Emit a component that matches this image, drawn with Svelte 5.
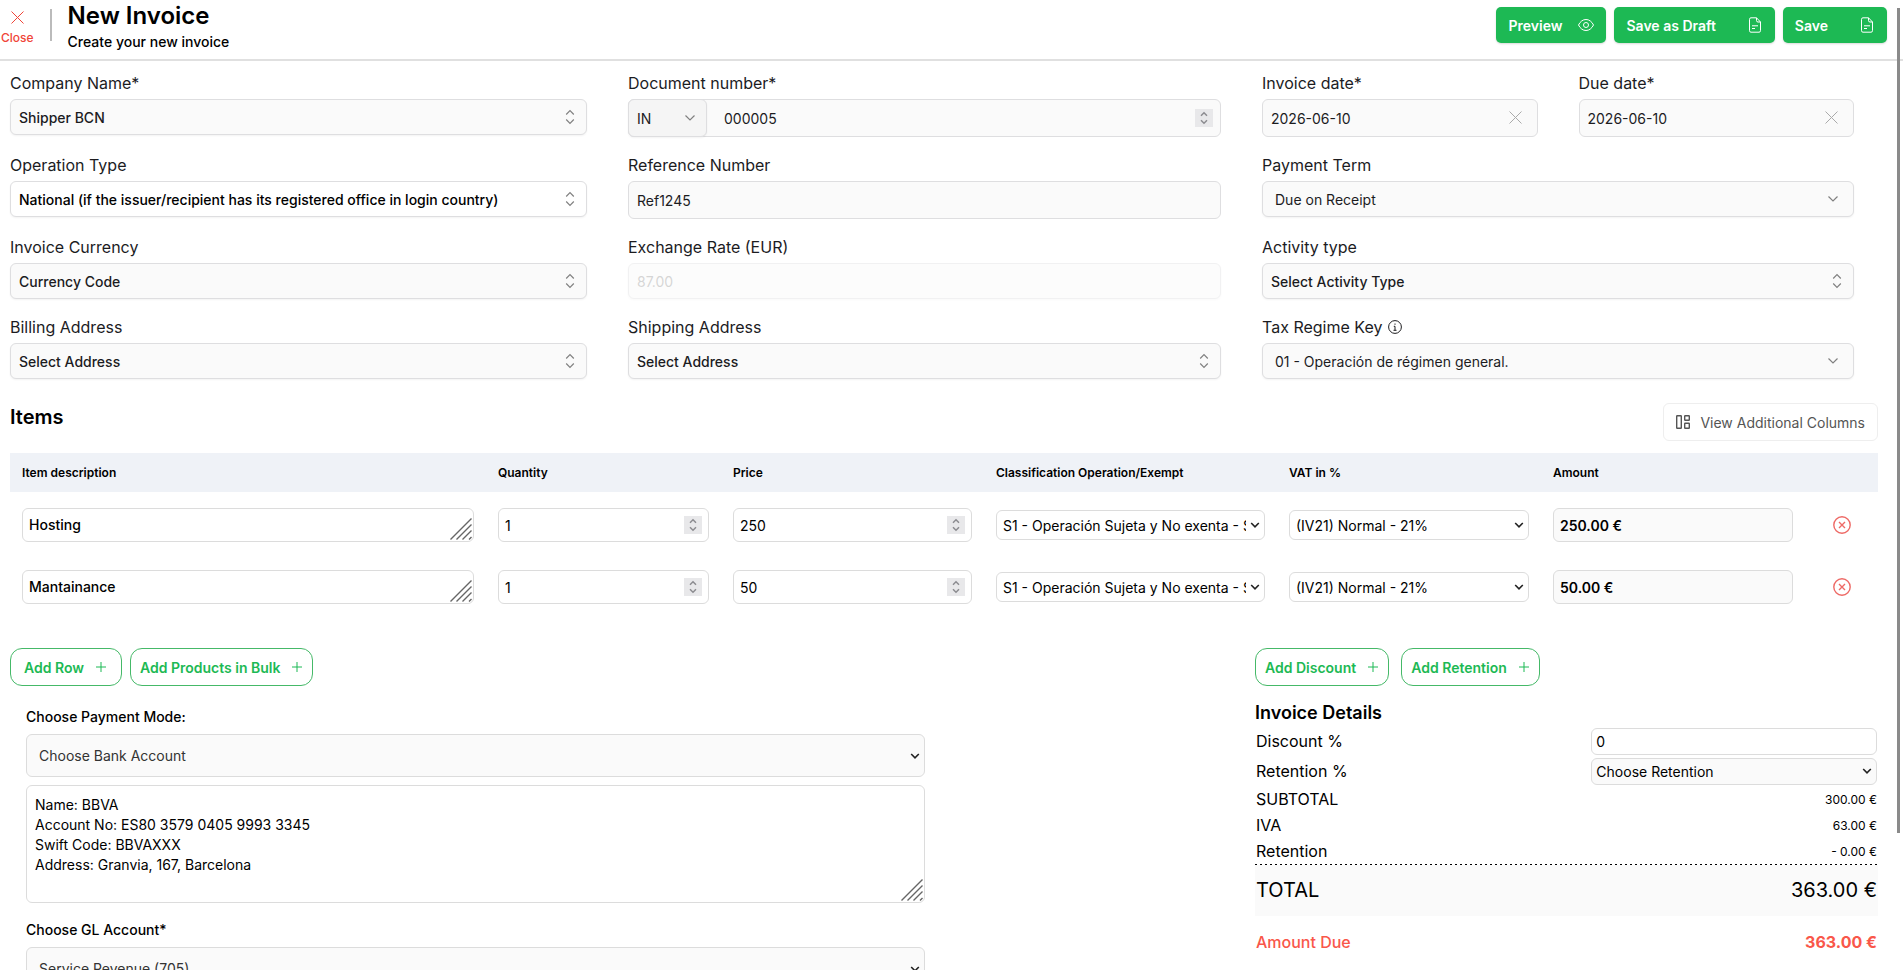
<script lang="ts">
  let items = $state([
    { name: 'Hosting', quantity: 1, price: 250 },
    { name: 'Mantainance', quantity: 1, price: 50 }
  ]);
  let invoiceDate = $state('2026-06-10');
  let dueDate = $state('2026-06-10');
  let discount = $state('0');
  let bankDetails = $state('Name: BBVA\nAccount No: ES80 3579 0405 9993 3345\nSwift Code: BBVAXXX\nAddress: Granvia, 167, Barcelona');

  const VAT = 0.21;
  let subtotal = $derived(items.reduce((sum, item) => sum + item.quantity * item.price, 0));
  let iva = $derived(subtotal * VAT);
  let total = $derived(subtotal + iva);

  function money(value: number){ return value.toFixed(2) + ' €'; }
  function addRow(){ items.push({ name: '', quantity: 1, price: 0 }); }
  function removeRow(index: number){ items.splice(index, 1); }
</script>

{#snippet updown()}
  <svg class="mark" width="10" height="16" viewBox="0 0 10 16"><path d="M1.200 5.500 5 1.700l3.800 3.800M1.200 10.500 5 14.300l3.800-3.800" /></svg>
{/snippet}

{#snippet chevron()}
  <svg class="mark chevron" width="10" height="6" viewBox="0 0 10 6"><path d="M0.5 0.5 5 5l4.500-4.500" /></svg>
{/snippet}

{#snippet arrow()}
  <svg class="mark arrow" width="10" height="6" viewBox="0 0 10 6"><path d="M1.200 1 5 4.800 8.800 1" /></svg>
{/snippet}

{#snippet spinner()}
  <svg class="mark spinner" width="18" height="18" viewBox="0 0 18 18"><rect width="18" height="18" /><path d="M6 6.800 9 3.800l3 3M6 11.200l3 3 3-3" /></svg>
{/snippet}

{#snippet cross()}
  <svg width="13" height="13" viewBox="0 0 13 13"><path d="M.5.5l12 12M12.500.5l-12 12" /></svg>
{/snippet}

{#snippet plus()}
  <svg width="10" height="10" viewBox="0 0 10 10"><path d="M5 0v10M0 5h10" /></svg>
{/snippet}

{#snippet file()}
  <svg width="12" height="16" viewBox="0 0 12 16"><path d="M7.500.8H2A1.500 1.500 0 0 0 .5 2.300v11.400A1.500 1.500 0 0 0 2 15.200h8a1.500 1.500 0 0 0 1.500-1.500V5zM7.500.8V3.500A1.500 1.500 0 0 0 9 5h2.500M3 8.800h6M3 11.500H6" /></svg>
{/snippet}

{#snippet grip()}
  <svg class="grip" width="22" height="22" viewBox="0 0 22 22"><path d="M.5 21.500 21.500.5M6.500 21.500l15-15M12.500 21.500l9-9M19 21.500l2.500-2.500" /></svg>
{/snippet}

{#snippet picker(id: string, label: string, option: string, white = false)}
  <div class="field">
    <label for={id}>{label}</label>
    <div class="control">
      <select {id} class="box strong" class:white><option>{option}</option></select>
      {@render updown()}
    </div>
  </div>
{/snippet}

<div class="page">
  <header>
    <button type="button" class="close">{@render cross()}<span>Close</span></button>
    <div class="heading">
      <h1>New Invoice</h1>
      <p>Create your new invoice</p>
    </div>
    <div class="actions">
      <button type="button">Preview
        <svg width="16" height="12" viewBox="0 0 16 12"><path d="M.5 6C2.300 2.500 4.800.5 8 .5s5.700 2 7.500 5.500c-1.800 3.500-4.300 5.500-7.500 5.500S2.300 9.500.5 6z" /><circle cx="8" cy="6" r="2.500" /></svg>
      </button>
      <button type="button" class="wide">Save as Draft {@render file()}</button>
      <button type="submit" class="wide">Save {@render file()}</button>
    </div>
  </header>

  <section class="details">
    {@render picker('company', 'Company Name*', 'Shipper BCN')}
    <div class="field">
      <label for="number">Document number*</label>
      <div class="document">
        <div class="control prefix">
          <select class="box" aria-label="Series"><option>IN</option></select>
          {@render chevron()}
        </div>
        <div class="control number">
          <input id="number" type="number" value="000005">
          {@render spinner()}
        </div>
      </div>
    </div>
    <div class="dates">
      <div class="field">
        <label for="invoice-date">Invoice date*</label>
        <div class="control">
          <input id="invoice-date" class="box tall" type="text" bind:value={invoiceDate}>
          <button type="button" class="clear" aria-label="Clear" onclick={() => invoiceDate = ''}>{@render cross()}</button>
        </div>
      </div>
      <div class="field">
        <label for="due-date">Due date*</label>
        <div class="control">
          <input id="due-date" class="box tall" type="text" bind:value={dueDate}>
          <button type="button" class="clear" aria-label="Clear" onclick={() => dueDate = ''}>{@render cross()}</button>
        </div>
      </div>
    </div>

    {@render picker('operation', 'Operation Type', 'National (if the issuer/recipient has its registered office in login country)', true)}
    <div class="field">
      <label for="reference">Reference Number</label>
      <input id="reference" class="box tall" type="text" value="Ref1245">
    </div>
    <div class="field">
      <label for="term">Payment Term</label>
      <div class="control">
        <select id="term" class="box inset"><option>Due on Receipt</option></select>
        {@render chevron()}
      </div>
    </div>

    {@render picker('currency', 'Invoice Currency', 'Currency Code')}
    <div class="field">
      <label for="rate">Exchange Rate (EUR)</label>
      <input id="rate" class="box" type="text" value="87.00" disabled>
    </div>
    {@render picker('activity', 'Activity type', 'Select Activity Type')}

    {@render picker('billing', 'Billing Address', 'Select Address')}
    {@render picker('shipping', 'Shipping Address', 'Select Address')}
    <div class="field">
      <label for="regime">Tax Regime Key
        <svg class="info" width="14" height="14" viewBox="0 0 14 14"><circle cx="7" cy="7" r="6.400" /><path d="M7 3.500v1.300M5.800 6.300H7v4M5.500 10.300h3" /></svg>
      </label>
      <div class="control">
        <select id="regime" class="box inset"><option>01 - Operación de régimen general.</option></select>
        {@render chevron()}
      </div>
    </div>
  </section>

  <section class="items">
    <div class="items-head">
      <h2>Items</h2>
      <button type="button" class="columns">
        <svg width="14" height="14" viewBox="0 0 14 14"><rect x=".7" y=".7" width="4.600" height="12.600" rx=".5" /><rect x="8.700" y=".7" width="4.600" height="4.600" rx=".5" /><rect x="8.700" y="8.200" width="4.600" height="5.100" rx=".5" /></svg>
        View Additional Columns
      </button>
    </div>

    <table>
      <thead>
        <tr>
          <th class="c-name">Item description</th>
          <th class="c-quantity">Quantity</th>
          <th class="c-price">Price</th>
          <th class="c-class">Classification Operation/Exempt</th>
          <th class="c-vat">VAT in %</th>
          <th class="c-amount">Amount</th>
          <th class="c-remove" aria-label="Remove"></th>
        </tr>
      </thead>
      <tbody>
        {#each items as item, i}
          <tr>
            <td>
              <div class="control">
                <textarea class="cell medium" rows="1" aria-label="Item description" bind:value={item.name}></textarea>
                {@render grip()}
              </div>
            </td>
            <td>
              <div class="control">
                <input class="cell" type="number" aria-label="Quantity" bind:value={item.quantity}>
                {@render spinner()}
              </div>
            </td>
            <td>
              <div class="control">
                <input class="cell" type="number" aria-label="Price" bind:value={item.price}>
                {@render spinner()}
              </div>
            </td>
            <td>
              <div class="control">
                <select class="cell" aria-label="Classification"><option>S1 - Operación Sujeta y No exenta - Sin inversión del sujeto pasivo</option></select>
                {@render arrow()}
              </div>
            </td>
            <td>
              <div class="control">
                <select class="cell" aria-label="VAT in %"><option>(IV21) Normal - 21%</option></select>
                {@render arrow()}
              </div>
            </td>
            <td><input class="cell amount" type="text" aria-label="Amount" value={money(item.quantity * item.price)} readonly></td>
            <td>
              <button type="button" class="remove" aria-label="Remove item" onclick={() => removeRow(i)}>
                <svg width="18" height="18" viewBox="0 0 18 18"><circle cx="9" cy="9" r="8.200" /><path d="M6 6l6 6M12 6l-6 6" /></svg>
              </button>
            </td>
          </tr>
        {/each}
      </tbody>
    </table>
  </section>

  <section class="bottom">
    <div class="payment">
      <div class="buttons">
        <button type="button" class="outline roomy" onclick={addRow}>Add Row {@render plus()}</button>
        <button type="button" class="outline">Add Products in Bulk {@render plus()}</button>
      </div>
      <div class="bank">
        <label for="bank">Choose Payment Mode:</label>
        <div class="control gap">
          <select id="bank" class="large"><option>Choose Bank Account</option></select>
          {@render arrow()}
        </div>
        <div class="control">
          <textarea class="large" rows="5" aria-label="Bank details" bind:value={bankDetails}></textarea>
          {@render grip()}
        </div>
        <label class="second" for="ledger">Choose GL Account*</label>
        <div class="control">
          <select id="ledger" class="large"><option>Service Revenue (705)</option></select>
          {@render arrow()}
        </div>
      </div>
    </div>

    <div class="summary">
      <div class="buttons">
        <button type="button" class="outline">Add Discount {@render plus()}</button>
        <button type="button" class="outline">Add Retention {@render plus()}</button>
      </div>
      <h3>Invoice Details</h3>
      <div class="line entry">
        <label for="discount">Discount %</label>
        <div class="control"><input id="discount" type="text" bind:value={discount}></div>
      </div>
      <div class="line entry">
        <label for="retention">Retention %</label>
        <div class="control">
          <select id="retention"><option>Choose Retention</option></select>
          {@render arrow()}
        </div>
      </div>
      <div class="line"><span>SUBTOTAL</span><small>{money(subtotal)}</small></div>
      <div class="line"><span>IVA</span><small>{money(iva)}</small></div>
      <div class="line"><span>Retention</span><small>- 0.00 €</small></div>
      <div class="total"><span>TOTAL</span><span>{money(total)}</span></div>
      <div class="due"><span>Amount Due</span><strong>{money(total)}</strong></div>
    </div>
  </section>
  <div class="scroll"></div>
</div>

<style>
  :global(body){margin: 0; overflow: hidden; background: #fff;}

  .page{position: relative; font-family: Inter, "Liberation Sans", sans-serif; font-size: 14px; color: #000;}
  .page *{box-sizing: border-box;}
  h1, h2, h3, p{margin: 0;}
  button, input, select, textarea{font: inherit; color: inherit; margin: 0;}
  button{display: flex; align-items: center; padding: 0; border: none; background: none; cursor: pointer; white-space: nowrap;}
  select{appearance: none;}
  svg{display: block; flex: none; fill: none; stroke: currentColor;}

  header{display: flex; height: 61px; border-bottom: 2px solid #e0e0e0;}
  .close{flex-direction: column; align-self: flex-start; gap: 5px; margin: 11px 0 0 1px; color: #f04438; font-size: 12px; font-weight: 500; line-height: 18px;}
  .heading{margin-left: 16px; padding-left: 18px; position: relative;}
  .heading::before{content: ''; position: absolute; left: 0; top: 9px; width: 2px; height: 32px; background: #bbb;}
  h1{font-size: 24px; line-height: 32px; font-weight: 600;}
  p{line-height: 20px; font-weight: 500;}
  .actions{display: flex; gap: 8px; margin: 7px 16px 0 auto; align-items: flex-start;}
  .actions button{height: 36px; gap: 16px; padding: 0 12px; border-radius: 5px; background: #1db954; color: #fff; font-weight: 600; box-shadow: 0 1px 2px rgba(0, 0, 0, .15);}
  .actions .wide{gap: 33px; padding-right: 14px;}

  .details{
    display: grid;
    grid-template-columns: minmax(0, 577fr) minmax(0, 593fr) minmax(0, 592fr);
    gap: 16px 41px;
    padding: 10px 49px 0 10px;
    color: #1c1c1f;
  }
  .dates{display: grid; grid-template-columns: 1fr 1fr; gap: 41px;}
  .field label{display: flex; align-items: center; gap: 6px; margin-bottom: 4px; font-size: 16px; line-height: 24px;}
  .control{position: relative;}
  .box{
    display: block; width: 100%; height: 36px;
    padding: 0 8px;
    border: 1px solid #dedee0; border-radius: 6px;
    background: #fafafa;
    box-shadow: 0 1px 2px rgba(0, 0, 0, .05);
  }
  .box.tall{height: 38px; box-shadow: none;}
  .box.strong{font-weight: 500;}
  .box.white{background: #fff; color: #000;}
  .box.inset{padding-left: 12px;}
  .box:disabled{opacity: .4; color: #999;}
  .mark{position: absolute; right: 12px; top: 50%; transform: translateY(-50%); color: #808080; stroke-width: 1.2; pointer-events: none;}
  .chevron{right: 16px;}
  .arrow{right: 5px; color: #222; stroke-width: 1.6;}
  .spinner{right: 7px; color: #8c8c90; stroke-width: 1.5;}
  .spinner rect{fill: #e8e8ea; stroke: none;}
  .document{display: flex; height: 38px; border: 1px solid #dedee0; border-radius: 6px; background: #fafafa;}
  .prefix{width: 79px; margin: -1px 0 -1px -1px;}
  .prefix .box{height: 38px; background: #f5f5f5;}
  .prefix .chevron{right: 12px;}
  .number{flex: 1;}
  .number input{width: 100%; height: 100%; padding: 0 7px 0 17px; border: none; background: none;}
  input[type=number]::-webkit-inner-spin-button{opacity: 0;}
  .clear{position: absolute; right: 16px; top: 12px; color: #aaa;}
  .info{stroke-width: 1;}

  .items{padding: 0 25px 0 10px;}
  .items-head{display: flex; justify-content: space-between; align-items: flex-start; padding: 24px 0 12px;}
  h2{font-size: 20px; line-height: 28px; font-weight: 600;}
  .columns{height: 38px; gap: 10px; padding: 0 12px; border: 1px solid #eee; border-radius: 6px; color: #555;}
  .columns svg{stroke-width: 1.4;}

  table{width: 100%; table-layout: fixed; border-collapse: collapse;}
  th{height: 39px; padding: 0 12px; background: #eff2f7; font-size: 12px; font-weight: 600; text-align: left;}
  td{padding: 16px 12px 12px; vertical-align: middle;}
  .c-name{width: 476px;}
  .c-quantity{width: 235px;}
  .c-price{width: 263px;}
  .c-class{width: 293px;}
  .c-vat, .c-amount{width: 264px;}
  .c-remove{width: 73px;}
  .cell{display: block; width: 100%; height: 34px; padding: 0 6px; border: 1px solid #dcdcdc; border-radius: 6px; background: #fff;}
  select.cell{height: 30px; padding: 0 18px 0 6px;}
  textarea{display: block; resize: none; overflow: hidden;}
  textarea.cell{padding: 6px; line-height: 20px;}
  .medium{font-weight: 500;}
  .amount{background: #fafafa; font-weight: 600;}
  .remove{margin: 0 auto; color: #ee6a66;}
  .remove svg{stroke-width: 1.4;}
  .grip{position: absolute; right: 2px; bottom: 2px; color: #666; stroke-width: 1.4; pointer-events: none;}

  .bottom{display: flex; justify-content: space-between; padding: 32px 25px 0 10px;}
  .buttons{display: flex; gap: 8px;}
  .outline{height: 38px; gap: 12px; padding: 0 10px 0 9px; border: 1px solid #45b968; border-radius: 12px; color: #1db954; font-weight: 600;}
  .outline.roomy{padding: 0 15px 0 13px;}
  .payment{width: 49%;}
  .bank{padding: 20px 0 0 16px;}
  .bank label{display: block; margin-bottom: 6px; line-height: 22px; font-weight: 500;}
  .bank .second{margin-top: 16px;}
  .gap{margin-bottom: 8px;}
  .large{display: block; width: 100%; border: 1px solid #dcdcdc; border-radius: 6px; background: #fff;}
  select.large{height: 43px; padding: 0 20px 0 12px; background: #fafafa; color: #333;}
  textarea.large{height: 118px; padding: 9px 8px; line-height: 20px;}

  .summary{width: 623px;}
  .summary .buttons{gap: 12px;}
  h3{margin-top: 14px; font-size: 18px; line-height: 26px; font-weight: 600;}
  .line{display: flex; justify-content: space-between; align-items: center; height: 26px; padding: 0 1px; font-size: 16px;}
  .line.entry{height: 30px;}
  .line small{font-size: 12px;}
  .line .control{width: 46%; font-size: 14px;}
  .line input, .line select{display: block; width: 100%; height: 27px; padding: 0 4px; border: 1px solid #dcdcdc; border-radius: 6px; background: #fff;}
  .line select{background: #fafafa;}
  .total{
    display: flex; justify-content: space-between; align-items: center;
    height: 52px; padding: 0 1px;
    background: repeating-linear-gradient(90deg, #000 0 2px, #fff 2px 5px) top / 100% 1px no-repeat #fafafa;
    font-size: 20px;
  }
  .due{display: flex; justify-content: space-between; padding: 14px 1px; font-size: 16px; line-height: 24px; color: #f9574a; font-weight: 500;}
  .scroll{position: fixed; top: 8px; right: 3px; width: 3px; height: 85vh; background: #8a8a8a;}
</style>
